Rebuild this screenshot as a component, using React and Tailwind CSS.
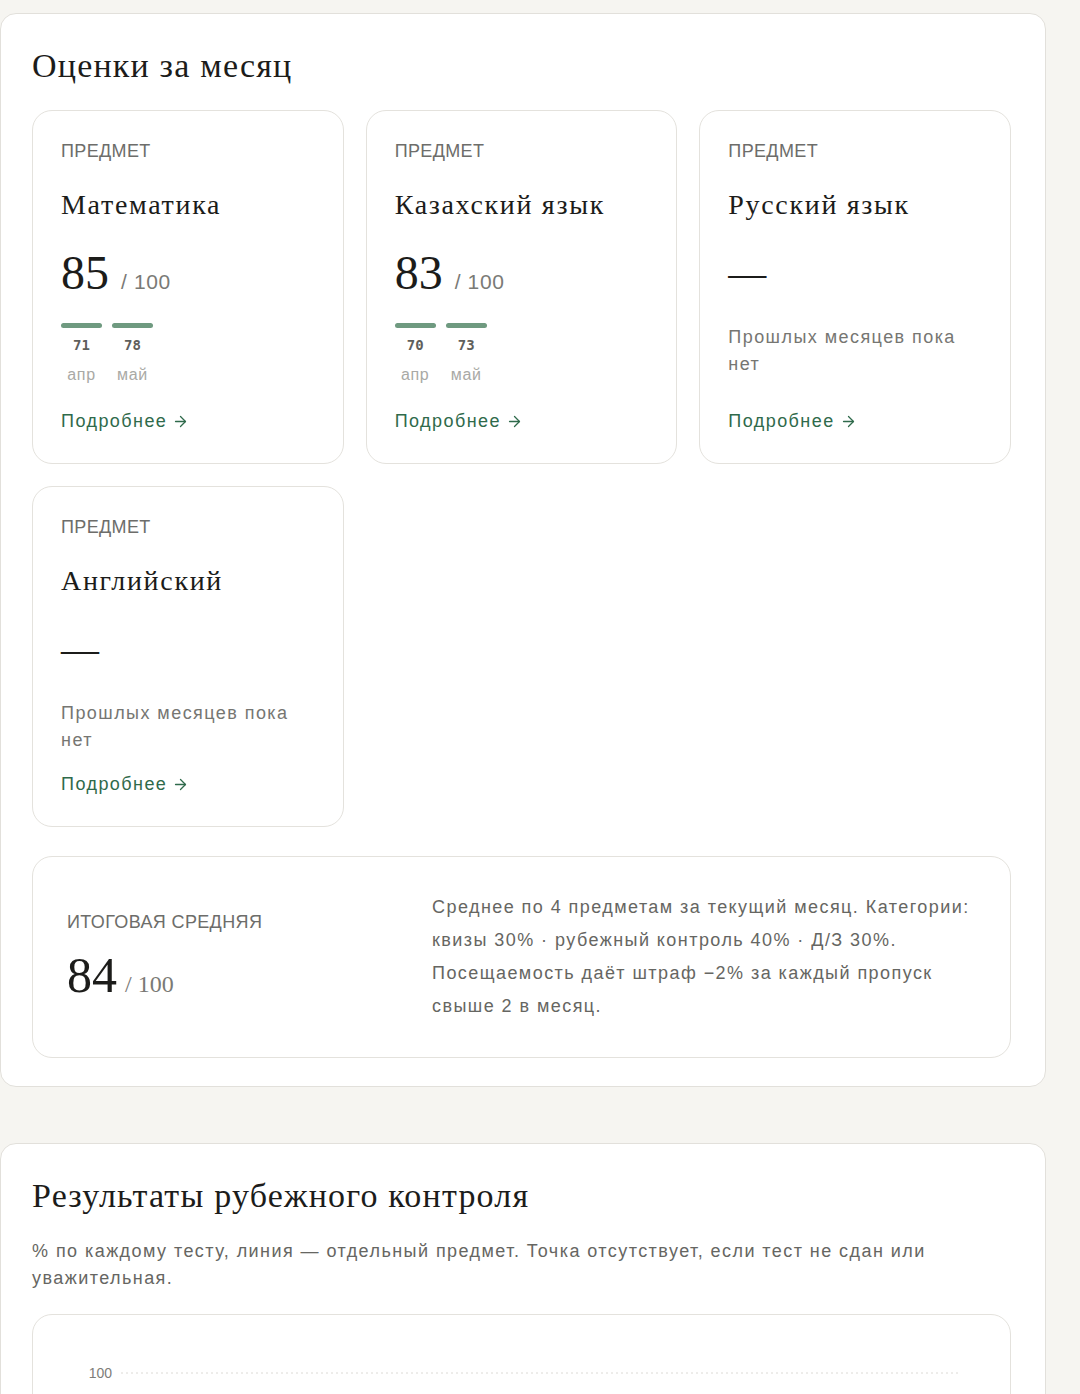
import React from 'react';
import { ArrowRight } from 'lucide-react';

const serif = "font-['Liberation_Serif','Times_New_Roman',serif]";
const sans = "font-['Liberation_Sans',Arial,sans-serif]";
const mono = "font-['DejaVu_Sans_Mono',monospace]";

const subjects = [
  { name: 'Математика', score: 85, history: [{ v: 71, m: 'апр' }, { v: 78, m: 'май' }] },
  { name: 'Казахский язык', score: 83, history: [{ v: 70, m: 'апр' }, { v: 73, m: 'май' }] },
  { name: 'Русский язык', score: null, history: [] },
  { name: 'Английский', score: null, history: [] },
];

const Eyebrow = ({ children }) => (
  <div className={`${sans} text-[18px] leading-5 uppercase tracking-[0.02em] text-[#6d6d6a]`}>{children}</div>
);

const SubjectCard = ({ subject }) => {
  const hasHistory = subject.history.length > 0;
  return (
    <div className="flex flex-col rounded-[20px] border border-[#e4e2dd] bg-white px-7 pt-[30px] pb-[30px]">
      <Eyebrow>Предмет</Eyebrow>
      <div className={`${serif} mt-7 text-[28px] leading-8 tracking-[0.06em] text-[#1c1c1a]`}>{subject.name}</div>

      {subject.score !== null ? (
        <div className="mt-6 flex h-14 items-baseline gap-3">
          <span className={`${serif} text-[48px] leading-[56px] text-[#1c1c1a]`}>{subject.score}</span>
          <span className={`${sans} text-[21px] tracking-[0.03em] text-[#7a7a76]`}>/ 100</span>
        </div>
      ) : (
        <div className={`${serif} mt-6 h-14 text-[38px] leading-[56px] text-[#1c1c1a]`}>—</div>
      )}

      {hasHistory ? (
        <div className="mt-[22px] flex gap-[10px]">
          {subject.history.map((h) => (
            <div key={h.m} className="flex w-[41px] flex-col items-center">
              <div className="h-[5px] w-full rounded-full bg-[#6f9a80]" />
              <div className={`${mono} mt-[8px] text-[14px] font-bold leading-[18px] text-[#5f5f5c]`}>{h.v}</div>
              <div className={`${sans} mt-[11px] text-[16px] leading-5 tracking-[0.04em] text-[#a9a9a5]`}>{h.m}</div>
            </div>
          ))}
        </div>
      ) : (
        <p className={`${sans} mt-[23px] text-[18px] leading-[27px] tracking-[0.08em] text-[#767672]`}>
          Прошлых месяцев пока нет
        </p>
      )}

      <div className={`mt-auto ${hasHistory ? 'pt-6' : 'pt-[18px]'}`}>
        <a href="#" className={`${sans} inline-flex items-center gap-[5px] text-[18px] leading-6 tracking-[0.08em] text-[#2f6a4b]`}>
          Подробнее
          <ArrowRight size={17} strokeWidth={1.8} />
        </a>
      </div>
    </div>
  );
};

// y-axis grid of the checkpoint chart
const ChartGrid = () => {
  const ticks = [100, 75, 50, 25, 0];
  return (
    <svg width="976" height="300" className="block">
      {ticks.map((t, i) => {
        const y = 58 + i * 56;
        return (
          <g key={t}>
            <text x="79" y={y + 5} textAnchor="end" fontSize="14" fill="#7d7d79" fontFamily="Liberation Sans, Arial, sans-serif">
              {t}
            </text>
            <line x1="88" x2="928" y1={y} y2={y} stroke="#dcdad5" strokeWidth="1" strokeDasharray="2 3" />
          </g>
        );
      })}
    </svg>
  );
};

export default function App() {
  return (
    <div className="min-h-[1394px] bg-[#f6f5f1] pt-[13px] pb-10">
      <div className="flex w-[1046px] flex-col gap-14">
        {/* monthly grades */}
        <section className="rounded-[16px] border border-[#e2e0db] bg-white pt-8 pr-[34px] pb-[28px] pl-[31px]">
          <h2 className={`${serif} text-[34px] leading-10 tracking-[0.035em] text-[#1c1c1a]`}>Оценки за месяц</h2>
          <div className="mt-6 grid grid-cols-3 gap-[22px]">
            {subjects.map((s) => (
              <SubjectCard key={s.name} subject={s} />
            ))}
          </div>

          <div className="mt-[29px] flex items-center rounded-[20px] border border-[#e4e2dd] bg-white px-[34px] py-[34px]">
            <div className="w-[365px] shrink-0">
              <Eyebrow>Итоговая средняя</Eyebrow>
              <div className="mt-[15px] flex items-baseline gap-2">
                <span className={`${serif} text-[50px] leading-[56px] text-[#1c1c1a]`}>84</span>
                <span className={`${serif} text-[24px] text-[#7a7a76]`}>/ 100</span>
              </div>
            </div>
            <p className={`${sans} text-[18px] leading-[33px] tracking-[0.08em] text-[#666662]`}>
              Среднее по 4 предметам за текущий месяц. Категории: квизы 30% · рубежный контроль 40% · Д/З 30%.
              Посещаемость даёт штраф −2% за каждый пропуск свыше 2 в месяц.
            </p>
          </div>
        </section>

        {/* checkpoint results */}
        <section className="rounded-[16px] border border-[#e2e0db] bg-white pt-8 pr-[34px] pb-8 pl-[31px]">
          <h2 className={`${serif} text-[34px] leading-10 tracking-[0.035em] text-[#1c1c1a]`}>Результаты рубежного контроля</h2>
          <p className={`${sans} mt-[22px] text-[18px] leading-[27px] tracking-[0.08em] text-[#666662]`}>
            % по каждому тесту, линия — отдельный предмет. Точка отсутствует, если тест не сдан или уважительная.
          </p>
          <div className="mt-[22px] rounded-[20px] border border-[#e4e2dd] bg-white">
            <ChartGrid />
          </div>
        </section>
      </div>
    </div>
  );
}
